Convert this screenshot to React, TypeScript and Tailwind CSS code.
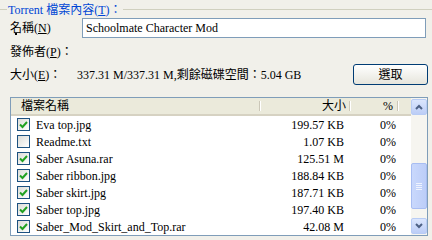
import React from "react";

type FileRow = { name: string; size: string; checked: boolean };

const files: FileRow[] = [
  { name: "Eva top.jpg", size: "199.57 KB", checked: true },
  { name: "Readme.txt", size: "1.07 KB", checked: false },
  { name: "Saber Asuna.rar", size: "125.51 M", checked: true },
  { name: "Saber ribbon.jpg", size: "188.84 KB", checked: true },
  { name: "Saber skirt.jpg", size: "187.71 KB", checked: true },
  { name: "Saber top.jpg", size: "197.40 KB", checked: true },
  { name: "Saber_Mod_Skirt_and_Top.rar", size: "42.08 M", checked: true },
];

const font = { fontFamily: '"Liberation Serif", "Noto Sans CJK TC", serif' };

function CheckBox({ checked }: { checked: boolean }) {
  return (
    <div className="flex h-[13px] w-[13px] shrink-0 items-center justify-center border border-[#1c5180] bg-gradient-to-br from-[#dcdcd7] to-[#ffffff]">
      {checked && (
        <svg width="9" height="9" viewBox="0 0 9 9">
          <path d="M1 4.5 L3.5 7 L8 2" fill="none" stroke="#21a121" strokeWidth="2" />
        </svg>
      )}
    </div>
  );
}

function Sep() {
  return <div className="my-[3px] w-[2px] self-stretch border-l border-r border-l-[#cbc7b8] border-r-white" />;
}

function ScrollBar() {
  return (
    <div className="flex w-[16px] flex-col bg-[#f6f5f0] py-[1px]">
      <div className="flex h-[16px] items-center justify-center rounded-[2px] border border-[#b8ccf5] bg-gradient-to-b from-[#dbe6fd] to-[#bccdf6]">
        <svg width="8" height="6" viewBox="0 0 8 6">
          <path d="M1 5 L4 2 L7 5" fill="none" stroke="#4d6185" strokeWidth="2" />
        </svg>
      </div>
      <div className="h-[48px]" />
      <div className="flex h-[46px] flex-col items-center justify-center gap-[1px] rounded-[2px] border border-[#a8bdf2] bg-gradient-to-r from-[#c9d8fc] to-[#bccdf8]">
        <div className="h-[1px] w-[6px] bg-[#eef3fe]" />
        <div className="h-[1px] w-[6px] bg-[#eef3fe]" />
        <div className="h-[1px] w-[6px] bg-[#eef3fe]" />
        <div className="h-[1px] w-[6px] bg-[#eef3fe]" />
      </div>
      <div className="flex-1" />
      <div className="flex h-[16px] items-center justify-center rounded-[2px] border border-[#b8ccf5] bg-gradient-to-b from-[#dbe6fd] to-[#bccdf6]">
        <svg width="8" height="6" viewBox="0 0 8 6">
          <path d="M1 1 L4 4 L7 1" fill="none" stroke="#4d6185" strokeWidth="2" />
        </svg>
      </div>
    </div>
  );
}

export default function App() {
  return (
    <div className="h-[240px] w-[432px] overflow-hidden bg-[#f1f0ea] text-[12px] text-black" style={font}>
      {/* group title */}
      <div className="flex h-[18px] items-center pt-[1px]">
        <div className="h-[1px] w-[7px] bg-[#d0d0bf]" />
        <span className="px-[1px] text-[#0046d5]">
          Torrent 檔案內容(<u>T</u>)：
        </span>
        <div className="h-[1px] flex-1 bg-[#d0d0bf]" />
      </div>

      <div className="pl-[10px]">
        <div className="flex h-[20px] items-start">
          <div className="flex h-[20px] w-[72px] flex-col overflow-hidden">
            <span className="pt-[3px] leading-[14px]">
              名稱(<u>N</u>)
            </span>
            {/* wrapped colon, only its upper dot shows */}
            <div className="-mt-[2px] ml-[5px] h-[2px] w-[2px] bg-black" />
          </div>
          <div className="mr-[6px] flex h-[20px] flex-1 items-center border border-[#7f9db9] bg-white pl-[3px]">
            Schoolmate Character Mod
          </div>
        </div>

        <div className="flex h-[23px] items-center pt-[4px]">
          發佈者(<u>P</u>)：
        </div>

        <div className="mt-[3px] flex h-[21px] items-center">
          <span className="w-[67px]">
            大小(<u>E</u>)：
          </span>
          <span className="flex-1">337.31 M/337.31 M,剩餘磁碟空間：5.04 GB</span>
          <button
            type="button"
            className="mr-[4px] h-[21px] w-[75px] rounded-[3px] border border-[#003c74] bg-gradient-to-b from-white to-[#e6e5dc]"
          >
            選取
          </button>
        </div>

        <div className="mt-[12px] mr-[4px] flex h-[139px] border border-[#7f9db9] bg-white">
          <div className="flex w-[400px] flex-col overflow-hidden">
            <div className="flex h-[18px] shrink-0 items-stretch border-b-2 border-[#d6d2c2] bg-[#ebeadb]">
              <div className="flex w-[248px] items-center pl-[10px]">檔案名稱</div>
              <Sep />
              <div className="flex w-[88px] items-center justify-end pr-[3px]">大小</div>
              <Sep />
              <div className="flex w-[46px] items-center justify-end pr-[4px]">%</div>
              <Sep />
            </div>
            {files.map((f) => (
              <div key={f.name} className="flex h-[17px] shrink-0 items-center">
                <div className="flex w-[250px] items-center gap-[6px] pl-[6px]">
                  <CheckBox checked={f.checked} />
                  <span className="whitespace-nowrap">{f.name}</span>
                </div>
                <div className="w-[90px] pr-[7px] text-right">{f.size}</div>
                <div className="w-[48px] pr-[3px] text-right">0%</div>
              </div>
            ))}
          </div>
          <div className="flex-1" />
          <ScrollBar />
        </div>
      </div>
    </div>
  );
}
